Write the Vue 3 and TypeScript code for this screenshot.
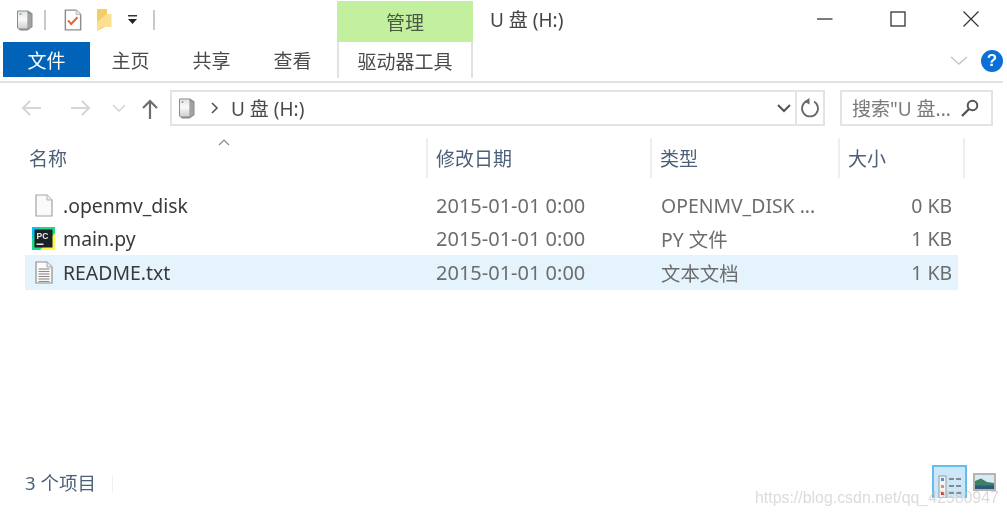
<script setup lang="ts">
interface Row {
  name: string
  date: string
  type: string
  size: string
  icon: 'blank' | 'pycharm' | 'text'
  selected?: boolean
}

const rows: Row[] = [
  { name: '.openmv_disk', date: '2015-01-01 0:00', type: 'OPENMV_DISK ...', size: '0 KB', icon: 'blank' },
  { name: 'main.py', date: '2015-01-01 0:00', type: 'PY 文件', size: '1 KB', icon: 'pycharm' },
  { name: 'README.txt', date: '2015-01-01 0:00', type: '文本文档', size: '1 KB', icon: 'text', selected: true },
]

const ribbonTabs = ['主页', '共享', '查看']
const textLines = [7, 9.5, 12, 14.5, 17, 19.5]
</script>

<template>
  <div class="explorer">
    <svg class="defs" width="0" height="0">
      <defs>
        <linearGradient id="driveFront" x1="0" y1="0" x2="0" y2="1">
          <stop offset="0" stop-color="#e4e4e4" />
          <stop offset="0.45" stop-color="#fafafa" />
          <stop offset="1" stop-color="#cfcfcf" />
        </linearGradient>
        <symbol id="drive" viewBox="0 0 18 22">
          <path d="M2 1.500h10l4.500 3v13.500l-5 3.500H4l-3-2.500V2z" fill="#8a8a8a" />
          <path d="M2 2.500h9.500v17H2z" fill="url(#driveFront)" />
          <path d="M12 4l3.500 1.500v12L12 20z" fill="#a2a2a2" />
          <rect x="3.500" y="4" width="2" height="2" fill="#7fc77f" />
        </symbol>
      </defs>
    </svg>

    <header class="titlebar">
      <div class="qat">
        <svg class="qat__drive" width="18" height="22"><use href="#drive" /></svg>
        <span class="qat__sep"></span>
        <svg class="qat__check" width="18" height="22" viewBox="0 0 20 24">
          <path d="M1.500 1h12l5 5v17h-17z" fill="#fff" stroke="#8d8d8d" stroke-width="1.600" />
          <path d="M13.500 1v5h5" fill="#eee" stroke="#b0b0b0" />
          <path d="M4.500 12.500l3.500 4 7-7.500" fill="none" stroke="#e8632a" stroke-width="2.200" />
        </svg>
        <svg class="qat__folder" width="16" height="23" viewBox="0 0 16 23">
          <path d="M1 1l10 0v17l-10 5z" fill="#f3cd66" />
          <path d="M11 6h4.500v13H6l-5 4V14z" fill="#fbe08f" />
        </svg>
        <svg class="qat__more" width="11" height="10" viewBox="0 0 11 10">
          <rect x="1" y="0" width="9" height="1.500" fill="#333" />
          <path d="M1 4h9L5.500 9z" fill="#222" />
        </svg>
        <span class="qat__sep"></span>
      </div>
      <div class="context-tab">管理</div>
      <div class="window-title">U 盘 (H:)</div>
      <div class="window-controls">
        <button type="button" class="win-btn">
          <svg width="16" height="16" viewBox="0 0 16 16"><path d="M0 8h15.500" stroke="#333" stroke-width="1.300" /></svg>
        </button>
        <button type="button" class="win-btn">
          <svg width="16" height="16" viewBox="0 0 16 16"><rect x="1" y="1" width="14" height="14" fill="none" stroke="#333" stroke-width="1.300" /></svg>
        </button>
        <button type="button" class="win-btn">
          <svg width="16" height="16" viewBox="0 0 16 16"><path d="M.5.500l15 15M15.500.500l-15 15" stroke="#333" stroke-width="1.200" /></svg>
        </button>
      </div>
    </header>

    <nav class="ribbon">
      <div class="tab tab--file">文件</div>
      <div v-for="t in ribbonTabs" :key="t" class="tab">{{ t }}</div>
      <div class="tab tab--tools">驱动器工具</div>
      <div class="ribbon__right">
        <svg width="18" height="10" viewBox="0 0 18 10"><path d="M1 1l8 7 8-7" fill="none" stroke="#c4c4c4" stroke-width="1.400" /></svg>
        <span class="help">?</span>
      </div>
    </nav>
    <div class="ribbon-line"></div>

    <section class="navbar">
      <div class="nav-buttons">
        <svg width="20" height="16" viewBox="0 0 20 16"><path d="M20 8H2M9 1L2 8l7 7" fill="none" stroke="#d5d5d5" stroke-width="2" /></svg>
        <svg width="20" height="16" viewBox="0 0 20 16"><path d="M0 8h18M11 1l7 7-7 7" fill="none" stroke="#d5d5d5" stroke-width="2" /></svg>
        <svg width="14" height="8" viewBox="0 0 14 8"><path d="M1 1l6 6 6-6" fill="none" stroke="#d5d5d5" stroke-width="1.500" /></svg>
        <svg width="16" height="20" viewBox="0 0 16 20"><path d="M8 20V2M1 9l7-7 7 7" fill="none" stroke="#6e6e6e" stroke-width="2.200" /></svg>
      </div>
      <div class="address">
        <svg width="18" height="22"><use href="#drive" /></svg>
        <svg class="address__sep" width="8" height="12" viewBox="0 0 8 12"><path d="M1 1l5 5-5 5" fill="none" stroke="#555" stroke-width="1.600" /></svg>
        <span class="address__path">U 盘 (H:)</span>
        <svg class="address__drop" width="14" height="9" viewBox="0 0 14 9"><path d="M1 1l6 6 6-6" fill="none" stroke="#555" stroke-width="2" /></svg>
        <span class="address__refresh">
          <svg width="20" height="20" viewBox="0 0 20 20">
            <path d="M6 3.500a8 8 0 1 0 8 0" fill="none" stroke="#6a6a6a" stroke-width="1.800" />
            <path d="M9.500 0v6.500L4 3.500z" fill="#6a6a6a" />
          </svg>
        </span>
      </div>
      <div class="search">
        <span class="search__text">搜索"U 盘...</span>
        <svg width="18" height="18" viewBox="0 0 18 18">
          <circle cx="11.500" cy="6.500" r="4.800" fill="none" stroke="#555" stroke-width="2" />
          <path d="M8 10l-7 7" stroke="#555" stroke-width="2.400" />
        </svg>
      </div>
    </section>

    <section class="columns">
      <div class="col col--name">
        名称
        <svg class="sort-caret" width="12" height="7" viewBox="0 0 12 7"><path d="M1 6l5-5 5 5" fill="none" stroke="#8a8a8a" stroke-width="1.200" /></svg>
      </div>
      <div class="col">修改日期</div>
      <div class="col">类型</div>
      <div class="col">大小</div>
    </section>

    <main class="list">
      <div v-for="r in rows" :key="r.name" class="row" :class="{ 'row--selected': r.selected }">
        <div class="cell cell--name">
          <svg v-if="r.icon === 'blank'" width="18" height="23" viewBox="0 0 18 23">
            <path d="M1 1h11l5 5v16H1z" fill="#fafafa" stroke="#a3a3a3" stroke-width="1.200" />
            <path d="M12 1v5h5" fill="#f0f0f0" stroke="#b5b5b5" />
          </svg>
          <svg v-else-if="r.icon === 'pycharm'" class="icon-pc" width="23" height="23" viewBox="0 0 23 23">
            <path d="M0 0h23v23H0z" fill="#21d789" />
            <path d="M23 6v17H8z" fill="#fcf84a" />
            <path d="M0 0h9L0 12z" fill="#07c3f2" />
            <rect x="2.500" y="2.500" width="18" height="18" fill="#1b2226" />
            <text x="4.500" y="11.500" class="icon-pc__text">PC</text>
            <rect x="4.500" y="16.500" width="7" height="1.500" fill="#eee" />
          </svg>
          <svg v-else width="18" height="23" viewBox="0 0 18 23">
            <path d="M1 1h11l5 5v16H1z" fill="#fbfbfb" stroke="#8f8f8f" stroke-width="1.200" />
            <path d="M12 1v5h5" fill="#eee" stroke="#a5a5a5" />
            <path v-for="y in textLines" :key="y" :d="`M3.500 ${y + 1}h11`" stroke="#8c8c8c" stroke-width="1.100" />
          </svg>
          <span class="cell__name">{{ r.name }}</span>
        </div>
        <div class="cell cell--date">{{ r.date }}</div>
        <div class="cell cell--type">{{ r.type }}</div>
        <div class="cell cell--size">{{ r.size }}</div>
      </div>
    </main>

    <footer class="status">
      <span class="status__count">3 个项目</span>
      <span class="status__sep"></span>
      <div class="views">
        <span class="view view--active">
          <svg width="24" height="24" viewBox="0 0 24 24">
            <rect x="1" y="2" width="7" height="22" fill="#f4f4f4" stroke="#9a9a9a" />
            <rect x="3" y="4" width="3" height="3" fill="#5b8fc9" />
            <rect x="3" y="11" width="3" height="3" fill="#c9a24a" />
            <rect x="3" y="18" width="3" height="3" fill="#d0392c" />
            <path d="M11 5h5M18 5h5M11 12h5M18 12h5M11 19h5M18 19h5" stroke="#6c6c6c" stroke-width="1.500" />
          </svg>
        </span>
        <svg class="view-thumb" width="23" height="18" viewBox="0 0 23 18">
          <rect x="1" y="1" width="21" height="16" fill="#d5e9f6" stroke="#b4b4b4" stroke-width="2" />
          <path d="M2 8l6-2.500 6 3.500 7 1v6H2z" fill="#3f7f62" />
          <path d="M2 12.500h19V16H2z" fill="#2d5a7c" />
        </svg>
      </div>
    </footer>

    <div class="watermark">https://blog.csdn.net/qq_42580947</div>
  </div>
</template>

<style scoped>
.explorer {
  position: relative;
  width: 1007px;
  height: 516px;
  display: flex;
  flex-direction: column;
  overflow: hidden;
  background: #fff;
  color: #3c3c3c;
  font-family: "Noto Sans", "Noto Sans CJK SC", sans-serif;
  font-size: 19px;
  filter: blur(0.45px);
}

.defs {
  position: absolute;
}

.titlebar {
  flex: none;
  height: 42px;
  display: flex;
}

.qat {
  flex: none;
  width: 337px;
  display: flex;
  align-items: center;
  padding: 0 0 0 16px;
  box-sizing: border-box;
  height: 39px;
}

.qat__sep {
  width: 2px;
  height: 20px;
  background: #c9c9c9;
}

.qat__drive {
  margin-right: 10px;
}

.qat__check {
  margin-left: 18px;
}

.qat__folder {
  margin-left: 14px;
}

.qat__more {
  margin-left: 15px;
  margin-right: 15px;
}

.context-tab {
  flex: none;
  width: 136px;
  margin-top: 1px;
  background: #c3f09f;
  color: #4a5a44;
  display: flex;
  align-items: center;
  justify-content: center;
}

.window-title {
  margin-left: 17px;
  margin-top: 6px;
  line-height: 28px;
  color: #444;
}

.window-controls {
  margin-left: auto;
  display: flex;
  height: 38px;
}

.win-btn {
  width: 73px;
  border: 0;
  padding: 0;
  background: none;
  display: flex;
  align-items: center;
  justify-content: center;
}

.ribbon {
  flex: none;
  height: 36px;
  display: flex;
  padding-left: 3px;
}

.tab {
  width: 81px;
  height: 35px;
  display: flex;
  align-items: center;
  justify-content: center;
  color: #4b4b4b;
}

.tab--file {
  width: 87px;
  background: #0163b8;
  color: #fff;
}

.tab--tools {
  width: 136px;
  height: 36px;
  margin-left: 4px;
  box-sizing: border-box;
  border: solid #e2e2e2;
  border-width: 0 2px;
  padding-top: 2px;
}

.ribbon__right {
  margin-left: auto;
  display: flex;
  align-items: center;
  gap: 13px;
  padding-right: 4px;
  height: 38px;
}

.help {
  width: 22px;
  height: 22px;
  border-radius: 50%;
  background: #0a70d6;
  color: #fff;
  font-family: "Liberation Sans", sans-serif;
  font-size: 17px;
  font-weight: 700;
  line-height: 22px;
  text-align: center;
}

.ribbon-line {
  flex: none;
  height: 2px;
  margin: 3px 4px 0 0;
  background: #e2e2e2;
}

.navbar {
  flex: none;
  height: 36px;
  margin-top: 7px;
  display: flex;
  align-items: center;
}

.nav-buttons {
  flex: none;
  width: 170px;
  box-sizing: border-box;
  padding-left: 21px;
  display: flex;
  align-items: center;
}

.nav-buttons svg:nth-child(2) {
  margin-left: 30px;
}

.nav-buttons svg:nth-child(3) {
  margin-left: 21px;
}

.nav-buttons svg:nth-child(4) {
  margin-left: 16px;
  margin-top: 2px;
}

.address {
  flex: none;
  width: 655px;
  height: 36px;
  box-sizing: border-box;
  border: 2px solid #e3e3e3;
  display: flex;
  align-items: center;
  padding-left: 6px;
}

.address__sep {
  margin-left: 15px;
}

.address__path {
  margin-left: 12px;
  color: #4a4a4a;
}

.address__drop {
  margin-left: auto;
  margin-right: 4px;
}

.address__refresh {
  width: 28px;
  height: 100%;
  box-sizing: border-box;
  border-left: 2px solid #e3e3e3;
  display: flex;
  align-items: center;
  justify-content: center;
}

.search {
  flex: none;
  width: 153px;
  height: 36px;
  margin-left: 15px;
  box-sizing: border-box;
  border: 2px solid #e3e3e3;
  display: flex;
  align-items: center;
  justify-content: space-between;
  padding: 0 12px 0 10px;
}

.search__text {
  color: #7a7a7a;
  white-space: nowrap;
}

.columns {
  flex: none;
  height: 40px;
  margin-top: 12px;
  display: grid;
  grid-template-columns: 428px 224px 188px 125px;
  color: #4c607a;
}

.col {
  position: relative;
  display: flex;
  align-items: center;
  box-sizing: border-box;
  border-right: 2px solid #eeeeee;
  padding-left: 8px;
}

.col--name {
  padding-left: 29px;
}

.sort-caret {
  position: absolute;
  left: 218px;
  top: 1px;
}

.list {
  flex: none;
  margin: 10px 0 0 25px;
  width: 933px;
  color: #6d6d6d;
  font-size: 19.400px;
}

.row {
  height: 33px;
  display: grid;
  grid-template-columns: 402px 224px 188px 119px;
  align-items: center;
}

.row:first-child {
  height: 34px;
}

.row--selected {
  height: 35px;
  background: #e5f3fd;
}

.cell {
  white-space: nowrap;
}

.cell--name {
  display: flex;
  align-items: center;
  color: #3a3a3a;
  padding-left: 9px;
}

.cell--name svg {
  flex: none;
  width: 20px;
}

.cell--name .icon-pc {
  width: 23px;
  margin: 0 -1px 0 -2px;
}

.cell__name {
  margin-left: 9px;
}

.cell--date {
  padding-left: 9px;
  font-size: 20px;
}

.cell--type {
  padding-left: 10px;
}

.cell--size {
  text-align: right;
  padding-right: 6px;
}

.icon-pc__text {
  font-family: "Liberation Sans", sans-serif;
  font-size: 8.500px;
  font-weight: 700;
  fill: #e8e8e8;
}

.status {
  flex: none;
  margin-top: auto;
  height: 51px;
  display: flex;
  align-items: flex-start;
  padding: 0 11px 0 25px;
  color: #4c607a;
  font-size: 18.500px;
}

.status__count {
  margin-top: 5px;
  line-height: 26px;
}

.status__sep {
  width: 1px;
  height: 18px;
  margin: 10px 0 0 16px;
  background: #f0f0f0;
}

.views {
  margin-left: auto;
  display: flex;
  gap: 6px;
}

.view {
  width: 35px;
  height: 33px;
  box-sizing: border-box;
  border: 2px solid #66bdec;
  border-bottom: 0;
  background: #cce8f8;
  display: flex;
  justify-content: center;
  padding-top: 7px;
  overflow: hidden;
}

.view-thumb {
  margin-top: 8px;
}

.watermark {
  position: absolute;
  left: 755px;
  top: 488px;
  font-family: "Liberation Sans", sans-serif;
  font-size: 15.900px;
  line-height: 20px;
  color: rgba(190, 190, 190, 0.55);
  white-space: nowrap;
}
</style>
